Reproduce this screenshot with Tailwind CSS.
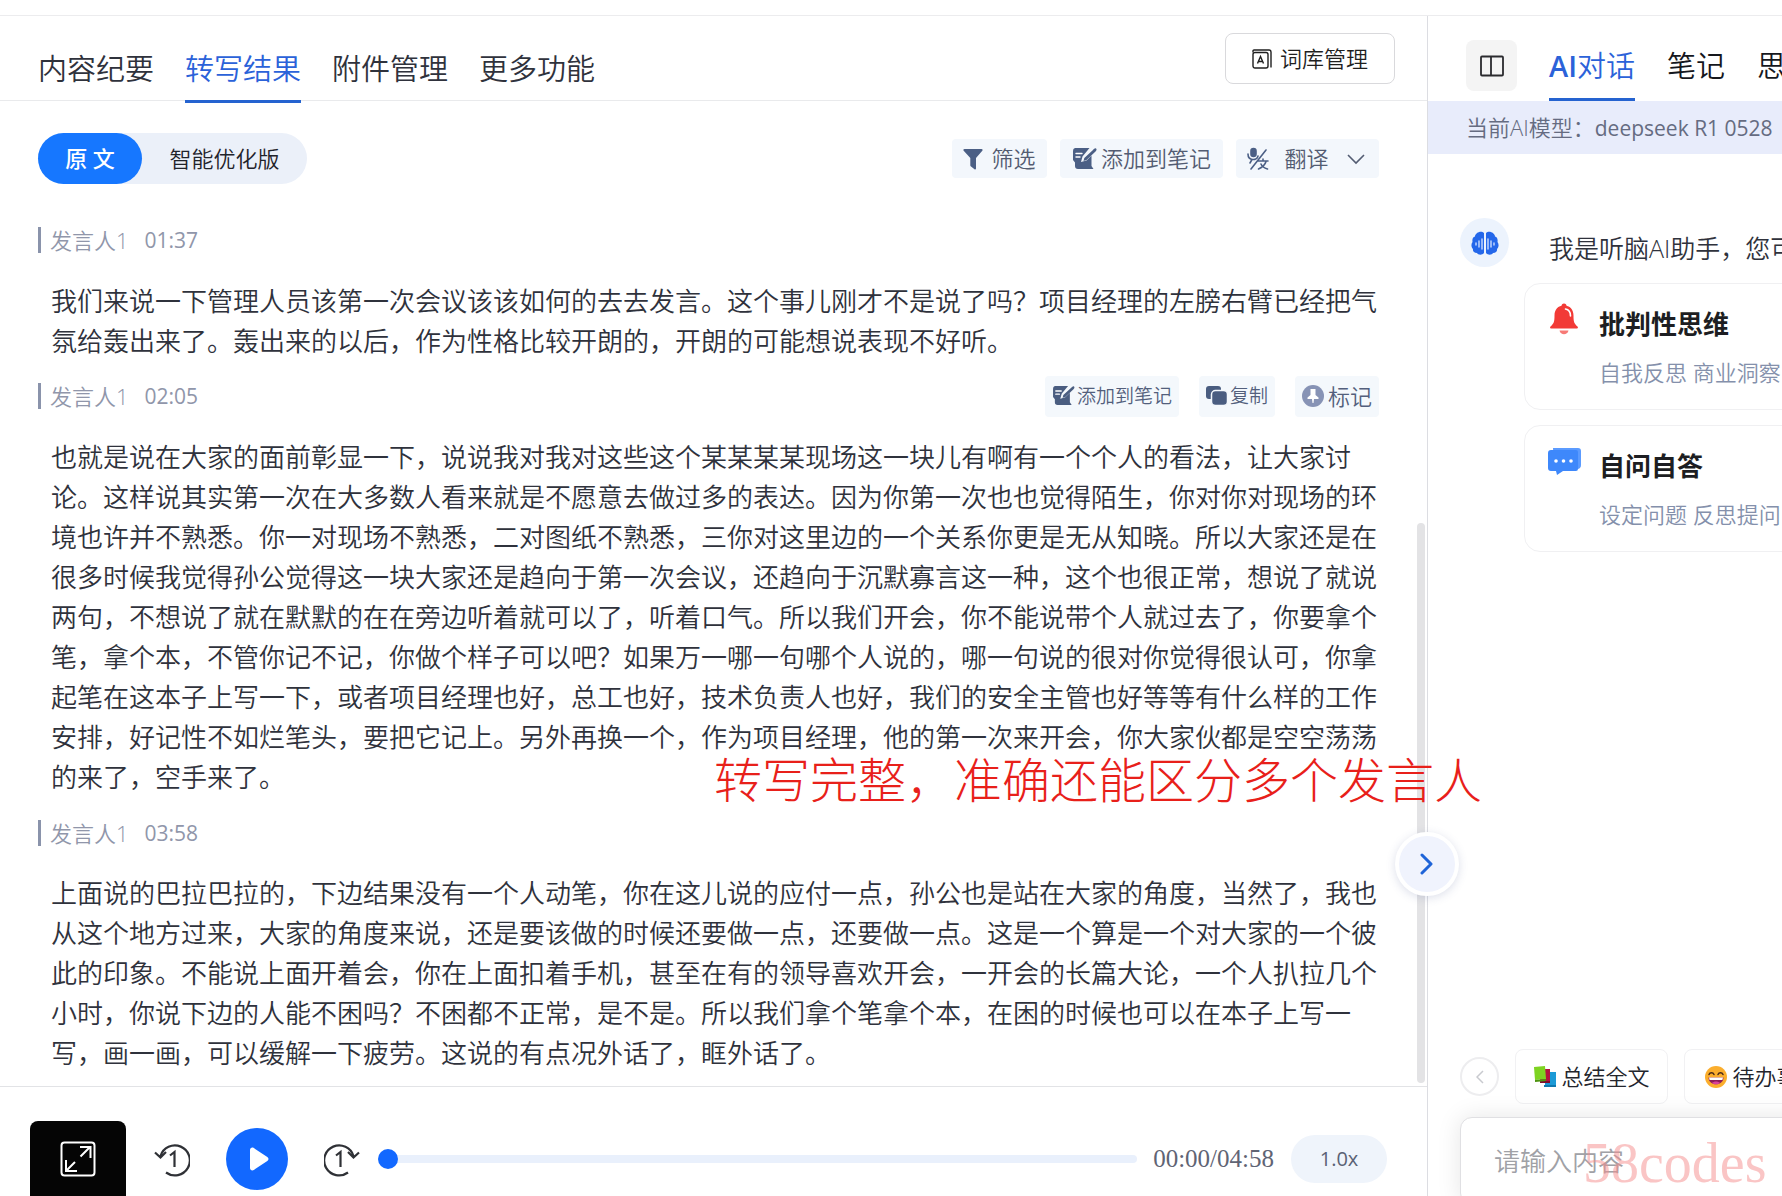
<!DOCTYPE html>
<html lang="zh-CN">
<head>
    <meta charset="UTF-8">
    <meta name="viewport" content="width=device-width, initial-scale=1.0">
    <title>转写结果</title>
    <script src="https://cdn.jsdelivr.net/npm/@tailwindcss/browser@4"></script>
    <style>
        body, button, input, select {
            font-family: 'Open Sans', 'Noto Sans CJK SC', sans-serif;
        }
    </style>
</head>
<body class="bg-white h-screen overflow-hidden flex flex-col font-[350] text-[#2f323c]">

    <!-- Shared icons -->
    <svg class="hidden">
        <symbol id="icon-note" viewBox="0 0 25 22">
            <path fill="currentColor" d="M3 0h14.500l-7 8.500-1.500 5.500 5.500-1.500 5-5V18l2 3H6a3 3 0 0 1-3-3v-3.500L1 12V3a3 3 0 0 1 2-3z"/>
            <path stroke="#fff" stroke-width="1.400" stroke-linecap="round" d="M4 5.500h6M4 9h4"/>
            <path fill="currentColor" d="M24 .500c1 .6.500 2-.5 3L14.500 12l-3 1 .8-3L21 2c1-1 2-2 3-1.500z"/>
        </symbol>
    </svg>

    <div class="h-4 shrink-0 border-b border-[#ececee]"></div>

    <div class="flex flex-1 min-h-0">

        <!-- Transcript column -->
        <main class="relative flex-1 min-w-0 flex flex-col border-r border-[#dcdde2]">
            <header class="h-[85px] shrink-0 border-b border-[#e9eaec] flex justify-between pl-[38px] pr-8">
                <nav class="flex gap-[31px] text-[29px] leading-[40px] pt-[33px]">
                    <a href="#" class="h-[54px]">内容纪要</a>
                    <a href="#" class="h-[54px] border-b-3 border-[#2563d0] text-[#2b62d9]">转写结果</a>
                    <a href="#" class="h-[54px]">附件管理</a>
                    <a href="#" class="h-[54px]">更多功能</a>
                </nav>
                <button class="mt-[17px] h-[51px] w-[170px] flex items-center justify-center gap-2 rounded-lg border border-[#d9d9dc] text-[22px] text-[#1f1f1f]">
                    <svg class="w-5 h-5" viewBox="0 0 20 20" fill="none" stroke="currentColor" stroke-width="1.400">
                        <path d="M1 3.500V2a1 1 0 0 1 1-1h15a2 2 0 0 1 2 2v15.500"/>
                        <rect x="1" y="3.500" width="15" height="15.500" rx="2"/>
                        <path d="M5.500 14.500 8.500 7.500l3 7M6.500 12.500h4"/>
                    </svg>
                    词库管理
                </button>
            </header>

            <!-- Version switch and tools -->
            <div class="h-[104px] shrink-0 flex justify-between items-start pt-8 pl-[38px] pr-12">
                <div class="h-[51px] flex rounded-full bg-[#ebf0f9] text-[22px]">
                    <button class="w-[104px] rounded-full bg-[#1677ff] text-white font-medium">原 文</button>
                    <button class="w-[165px] text-[#1f232b]">智能优化版</button>
                </div>
                <div class="flex gap-[13px] pt-[6px] text-[22px] text-[#535c72]">
                    <button class="h-[39px] w-[95px] flex items-center justify-center gap-2 rounded bg-[#f3f7fc]">
                        <svg class="w-5 h-[22px] text-[#4b5f85]" viewBox="0 0 20 22" fill="currentColor"><path d="M1.500 1h17c1 0 1.500 1 .8 1.800L13 10v10.500c0 .8-.8 1.200-1.500.7L8 18.500c-.5-.3-.7-.7-.7-1.200V10L.7 2.800C0 2 .5 1 1.500 1z"/></svg>
                        筛选
                    </button>
                    <button class="h-[39px] w-[163px] flex items-center justify-center gap-1 rounded bg-[#f3f7fc]">
                        <svg class="w-[25px] h-[22px] text-[#4b5f85]"><use href="#icon-note"/></svg>
                        添加到笔记
                    </button>
                    <label class="h-[39px] w-[143px] flex items-center justify-between px-[10px] rounded bg-[#f3f7fc]">
                        <svg class="w-6 h-6 text-[#4b5f85]" viewBox="0 0 24 24" fill="none" stroke="currentColor" stroke-width="1.600" stroke-linecap="round">
                            <rect x="5" y="1.500" width="5" height="8" rx="2.500" fill="currentColor"/>
                            <path d="M2 7c0 7 9 7 10 2M6 12.500 4 16M20 3 5 22M12.500 14H22M17 12v2M20 14.500c-1 3.500-4 6-7.500 7.500M15 17c1 2.500 3 4 6.500 5"/>
                        </svg>
                        <select aria-label="翻译" class="appearance-none bg-transparent w-[48px]"><option>翻译</option></select>
                        <svg class="w-[18px] h-3 mr-1" viewBox="0 0 18 12" fill="none" stroke="currentColor" stroke-width="1.600"><path d="m1 2 8 8 8-8"/></svg>
                    </label>
                </div>
            </div>

            <!-- Transcript -->
            <div class="flex-1 min-h-0 overflow-hidden pl-[38px] pr-12 text-[26px] leading-[40px]">
                <section>
                    <div class="h-[76px] pb-[6px] flex items-center text-[22px] text-[#9096aa]">
                        <span class="w-[3px] h-[26px] bg-[#8a93ab] mr-[9px]"></span>
                        <span class="mr-4">发言人1</span><time class="text-[21px] font-normal">01:37</time>
                    </div>
                    <p class="pl-[13px]">我们来说一下管理人员该第一次会议该该如何的去去发言。这个事儿刚才不是说了吗？项目经理的左膀右臂已经把气氛给轰出来了。轰出来的以后，作为性格比较开朗的，开朗的可能想说表现不好听。</p>
                </section>
                <section>
                    <div class="h-[76px] pb-[6px] flex items-center text-[22px] text-[#9096aa]">
                        <span class="w-[3px] h-[26px] bg-[#8a93ab] mr-[9px]"></span>
                        <span class="mr-4">发言人1</span><time class="text-[21px] font-normal">02:05</time>
                        <div class="ml-auto flex gap-5 text-[#535f7c]">
                            <button class="h-[41px] w-[134px] flex items-center justify-center gap-[2px] rounded bg-[#f4f8fc] text-[19px]">
                                <svg class="w-[23px] h-5 text-[#4a5d80]"><use href="#icon-note"/></svg>
                                添加到笔记
                            </button>
                            <button class="h-[41px] w-[76px] flex items-center justify-center gap-[2px] rounded bg-[#f4f8fc] text-[19px]">
                                <svg class="w-[22px] h-5 text-[#4a5d80]" viewBox="0 0 22 20" fill="currentColor">
                                    <rect x="0" y="0" width="15" height="13" rx="3"/>
                                    <rect x="5.500" y="4.500" width="16" height="15" rx="4" stroke="#f4f8fc" stroke-width="1.500"/>
                                </svg>
                                复制
                            </button>
                            <button class="h-[41px] w-[84px] flex items-center justify-center gap-1 rounded bg-[#f4f8fc] text-[22px]">
                                <svg class="w-[22px] h-[22px]" viewBox="0 0 22 22">
                                    <circle cx="11" cy="11" r="11" fill="#8793b5"/>
                                    <path fill="#fff" d="M8.500 4h5v6l3 2.500v1.500h-4.500l-.5 4h-1l-.5-4H5.500v-1.500l3-2.500z"/>
                                </svg>
                                标记
                            </button>
                        </div>
                    </div>
                    <p class="pl-[13px]">也就是说在大家的面前彰显一下，说说我对我对这些这个某某某某现场这一块儿有啊有一个个人的看法，让大家讨论。这样说其实第一次在大多数人看来就是不愿意去做过多的表达。因为你第一次也也觉得陌生，你对你对现场的环境也许并不熟悉。你一对现场不熟悉，二对图纸不熟悉，三你对这里边的一个关系你更是无从知晓。所以大家还是在很多时候我觉得孙公觉得这一块大家还是趋向于第一次会议，还趋向于沉默寡言这一种，这个也很正常，想说了就说两句，不想说了就在默默的在在旁边听着就可以了，听着口气。所以我们开会，你不能说带个人就过去了，你要拿个笔，拿个本，不管你记不记，你做个样子可以吧？如果万一哪一句哪个人说的，哪一句说的很对你觉得很认可，你拿起笔在这本子上写一下，或者项目经理也好，总工也好，技术负责人也好，我们的安全主管也好等等有什么样的工作安排，好记性不如烂笔头，要把它记上。另外再换一个，作为项目经理，他的第一次来开会，你大家伙都是空空荡荡的来了，空手来了。</p>
                </section>
                <section>
                    <div class="h-[76px] pb-1 flex items-center text-[22px] text-[#9096aa]">
                        <span class="w-[3px] h-[26px] bg-[#8a93ab] mr-[9px]"></span>
                        <span class="mr-4">发言人1</span><time class="text-[21px] font-normal">03:58</time>
                    </div>
                    <p class="pl-[13px]">上面说的巴拉巴拉的，下边结果没有一个人动笔，你在这儿说的应付一点，孙公也是站在大家的角度，当然了，我也从这个地方过来，大家的角度来说，还是要该做的时候还要做一点，还要做一点。这是一个算是一个对大家的一个彼此的印象。不能说上面开着会，你在上面扣着手机，甚至在有的领导喜欢开会，一开会的长篇大论，一个人扒拉几个小时，你说下边的人能不困吗？不困都不正常，是不是。所以我们拿个笔拿个本，在困的时候也可以在本子上写一写，画一画，可以缓解一下疲劳。这说的有点况外话了，眶外话了。</p>
                </section>
            </div>

            <!-- Player -->
            <footer class="h-[110px] shrink-0 overflow-hidden border-t border-[#e2e3e6] pt-[34px] pl-[30px] pr-10">
                <div class="h-[76px] flex items-center">
                    <button aria-label="放大" class="w-24 h-[76px] rounded-t-lg bg-[#050505] text-white flex items-center justify-center">
                        <svg class="w-9 h-9" viewBox="0 0 36 36" fill="none" stroke="currentColor" stroke-width="2">
                            <rect x="1.500" y="1.500" width="33" height="33" rx="3"/>
                            <path d="M20.500 15.500 30 6M20 6h10.500v11M15 21 6 30M6 19v11h11"/>
                        </svg>
                    </button>
                    <button aria-label="后退" class="ml-7 text-[#2f3136]">
                        <svg class="w-9 h-9" viewBox="0 0 36 36" fill="none" stroke="currentColor" stroke-width="2.200">
                            <path d="M12 31.500A15 15 0 1 0 6.500 15M1 11.500l5.500 5 5.500-5.500"/>
                            <path d="M16 14.500l4.500-3.500V26"/>
                        </svg>
                    </button>
                    <button aria-label="播放" class="ml-9 w-[62px] h-[62px] rounded-full bg-[#1268ff] text-white flex items-center justify-center">
                        <svg class="w-[22px] h-6 ml-1" viewBox="0 0 22 24" fill="currentColor"><path d="M2 3c0-2 2-3 3.800-2l13.500 9c1.600 1 1.600 3 0 4l-13.500 9C4 24 2 23 2 21z"/></svg>
                    </button>
                    <button aria-label="前进" class="ml-9 text-[#2f3136]">
                        <svg class="w-9 h-9" viewBox="0 0 36 36" fill="none" stroke="currentColor" stroke-width="2.200">
                            <path d="M24 31.500A15 15 0 1 1 29.500 15M35 11.500l-5.500 5-5.500-5.500"/>
                            <path d="M12 14.500l4.500-3.500V26"/>
                        </svg>
                    </button>
                    <input type="range" aria-label="播放进度" min="0" max="298" value="0" class="ml-[18px] min-w-0 flex-1 h-5 appearance-none bg-transparent [&::-webkit-slider-runnable-track]:h-2 [&::-webkit-slider-runnable-track]:rounded-full [&::-webkit-slider-runnable-track]:bg-[#e9f0fc] [&::-webkit-slider-thumb]:appearance-none [&::-webkit-slider-thumb]:w-5 [&::-webkit-slider-thumb]:h-5 [&::-webkit-slider-thumb]:-mt-[6px] [&::-webkit-slider-thumb]:rounded-full [&::-webkit-slider-thumb]:bg-[#1268ff]">
                    <time class="ml-4 font-['Liberation_Serif',serif] text-[25px] text-[#5f6474]">00:00/04:58</time>
                    <select aria-label="倍速" class="ml-[17px] w-24 h-12 rounded-full appearance-none bg-[#eff4fb] text-center font-['Roboto',sans-serif] font-normal text-[20px] text-[#5a6275]"><option>1.0x</option></select>
                </div>
            </footer>

            <!-- Scrollbar -->
            <div class="absolute right-[2px] top-[507px] bottom-[113px] w-2 rounded-full bg-[#e3e3e5]"></div>
            <button aria-label="收起" class="absolute -right-8 top-[816px] z-10 w-16 h-16 rounded-full border-4 border-white bg-[#f0f3fd] shadow-[0_2px_10px_rgba(60,80,140,0.18)] text-[#1f64d8] flex items-center justify-center">
                <svg class="w-[14px] h-6" viewBox="0 0 14 24" fill="none" stroke="currentColor" stroke-width="3" stroke-linecap="round" stroke-linejoin="round"><path d="m2 3 9 9-9 9"/></svg>
            </button>
            <p class="absolute left-[714px] top-[740px] z-20 whitespace-nowrap text-[48px] leading-[48px] font-light text-[#e8201a]">转写完整，准确还能区分多个发言人</p>
        </main>

        <!-- AI panel -->
        <aside class="w-[354px] shrink-0 overflow-hidden flex flex-col whitespace-nowrap">
            <header class="h-[85px] shrink-0 flex items-start pl-[38px]">
                <button aria-label="切换布局" class="mt-6 w-[51px] h-[51px] shrink-0 rounded-lg bg-[#f4f4f4] flex items-center justify-center">
                    <svg class="w-6 h-[22px]" viewBox="0 0 24 22" fill="none" stroke="#2a2a2e" stroke-width="1.800"><rect x="1" y="1.500" width="22" height="19" rx="1"/><path d="M11 1.500v19"/></svg>
                </button>
                <nav class="ml-8 flex gap-8 text-[29px] leading-[40px] text-[#15171d] pt-[30px]">
                    <a href="#" class="h-[55px] border-b-3 border-[#2563d0] text-[#2b62d9]"><span class="font-semibold">AI</span>对话</a>
                    <a href="#" class="h-[55px]">笔记</a>
                    <a href="#" class="h-[55px]">思维导图</a>
                </nav>
            </header>
            <div class="h-[53px] shrink-0 bg-[#e8ecfb] pl-[38px] text-[22px] leading-[53px] text-[#656b81]">当前AI模型：<span class="text-[21px] font-normal">deepseek R1 0528</span></div>

            <div class="flex-1 pt-16">
                <div class="flex pl-8 gap-10">
                    <div class="w-[49px] h-[49px] shrink-0 rounded-full bg-[#ecf3fd] flex items-center justify-center">
                        <svg class="w-7 h-6" viewBox="0 0 28 24">
                            <path fill="#2467ea" d="M13 2v20c-2 2.500-6 2-7 0-3 0-4.500-2-4-4-2-2-2-5-.500-7C1 8 2 6 4 5.500 4 2 10-1 13 2zM15 2v20c2 2.500 6 2 7 0 3 0 4.500-2 4-4 2-2 2-5 .5-7 .5-3-.5-5-2.500-5.500C24 2 18-1 15 2z"/>
                            <path stroke="#d9e6ff" stroke-width="1.300" stroke-linecap="round" d="M5 12v2M8 10v6M11 8v10M17 8v10M20 10v6M23 12v2"/>
                        </svg>
                    </div>
                    <p class="text-[25px] leading-[60px]">我是听脑AI助手，您可以</p>
                </div>
                <div class="mt-[5px] ml-24 flex flex-col gap-[15px]">
                    <a href="#" class="h-[127px] w-[480px] flex gap-5 rounded-2xl border border-[#f0f0f2] pl-6 pt-[19px]">
                        <svg class="w-[30px] h-8" viewBox="0 0 30 32">
                            <circle cx="15" cy="3" r="2.500" fill="#f23a36"/>
                            <path fill="#f23a36" d="M15 2.500c6 0 9.500 4 9.500 10 0 6 .5 8 4 11 .8.8.500 2-.5 2H2c-1 0-1.300-1.200-.5-2 3.500-3 4-5 4-11 0-6 3.500-10 9.500-10z"/>
                            <path fill="#f77a76" d="M10.500 27.500h9c-1 5-8 5-9 0z"/>
                            <path d="M16.500 6c3 .5 5 3 5 7" fill="none" stroke="#fff" stroke-width="1.600" stroke-linecap="round"/>
                        </svg>
                        <div>
                            <h3 class="text-[26px] leading-[42px] font-bold text-[#1d1e22]">批判性思维</h3>
                            <p class="mt-[11px] text-[22px] leading-[32px] text-[#8490ab]">自我反思 商业洞察</p>
                        </div>
                    </a>
                    <a href="#" class="h-[127px] w-[480px] flex gap-[17px] rounded-2xl border border-[#f0f0f2] pl-[23px] pt-[19px]">
                        <svg class="w-[34px] h-8" viewBox="0 0 34 32">
                            <path fill="#5b9bff" d="M5 3h25a3 3 0 0 1 3 3v14a4 4 0 0 1-3 4H6z"/>
                            <path fill="#3e88fb" d="M3 5h25a2 2 0 0 1 2 2v17a2 2 0 0 1-2 2H15l-6 4-1-4H3a3 3 0 0 1-3-3V8a3 3 0 0 1 3-3z"/>
                            <g fill="#fff"><circle cx="8" cy="16" r="1.800"/><circle cx="15.500" cy="16" r="1.800"/><circle cx="23" cy="16" r="1.800"/></g>
                        </svg>
                        <div>
                            <h3 class="text-[26px] leading-[42px] font-bold text-[#1d1e22]">自问自答</h3>
                            <p class="mt-[11px] text-[22px] leading-[32px] text-[#8490ab]">设定问题 反思提问</p>
                        </div>
                    </a>
                </div>
            </div>

            <!-- Quick prompts -->
            <div class="h-[55px] shrink-0 mb-[13px] flex items-center gap-4 pl-8 text-[22px] text-[#23252c]">
                <button aria-label="上一个" class="w-[39px] h-[39px] shrink-0 rounded-full border-2 border-[#ededef] flex items-center justify-center">
                    <svg class="w-2 h-4" viewBox="0 0 8 16" fill="none" stroke="#c9cacf" stroke-width="1.500"><path d="M7 2 1 8l6 6"/></svg>
                </button>
                <button class="h-[55px] w-[153px] shrink-0 flex items-center justify-center gap-1 rounded-lg border border-[#f1f1f3]">
                    <svg class="w-6 h-6" viewBox="0 0 24 24">
                        <path fill="#1c9ad6" d="M12 7h11v15H12z"/><path fill="#0f78ae" d="M11 20h12v2H11z"/>
                        <path fill="#b5123f" d="M7 4h10v14H7z"/><path fill="#7d0d2c" d="M7 16h10v2H7z"/>
                        <path fill="#7ed321" d="m1 2 11-1 1 13-11 1z"/><path fill="#4e9410" d="m2 15 11-1v2L2 17z"/>
                    </svg>
                    总结全文
                </button>
                <button class="h-[55px] w-[157px] shrink-0 flex items-center justify-center gap-1 rounded-lg border border-[#f1f1f3]">
                    <svg class="w-6 h-6" viewBox="0 0 24 24">
                        <circle cx="12" cy="12" r="11" fill="#fbae2d"/>
                        <path d="M5 9.500c1-2.500 4-2.500 5 0M14 9.500c1-2.500 4-2.500 5 0" fill="none" stroke="#4a2b1a" stroke-width="1.500" stroke-linecap="round"/>
                        <path fill="#8d1b58" d="M4.500 12.500h15c0 9-15 9-15 0z"/><path fill="#fff" d="M5 12.500h14l-.6 2.500H5.600z"/><path fill="#d8429a" d="M8 18c2-2 6-2 8 0-2 1.800-6 1.800-8 0z"/>
                    </svg>
                    待办事项
                </button>
            </div>
            <div class="relative h-[79px] shrink-0 ml-8">
                <input type="text" aria-label="请输入内容" placeholder="请输入内容" class="w-[480px] h-[88px] rounded-xl border border-[#e0e0e3] bg-white pl-[33px] text-[26px] placeholder:text-[#a0a1a6] shadow-[0_0_24px_rgba(0,0,0,0.1)]">
                <span class="absolute left-[123px] top-[18px] font-['Liberation_Serif',serif] text-[56px] leading-[56px] text-[#f58c8c]/50">58codes</span>
            </div>
        </aside>
    </div>

</body>
</html>
